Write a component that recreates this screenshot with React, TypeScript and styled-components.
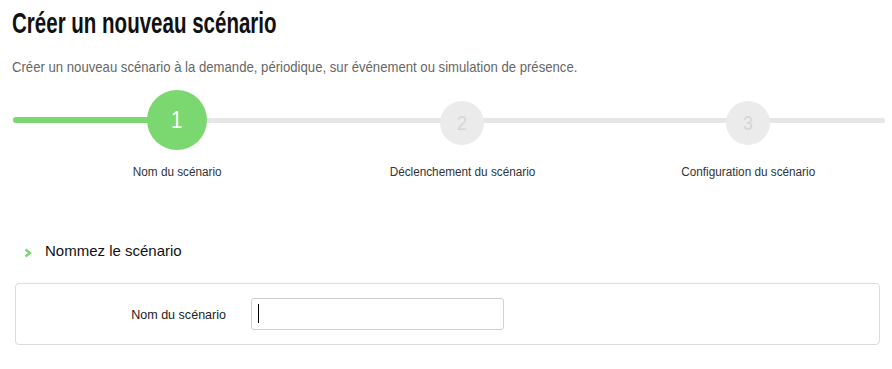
import React from 'react';
import styled, { createGlobalStyle } from 'styled-components';

const GlobalStyle = createGlobalStyle`
  body {
    margin: 0;
    background: #ffffff;
    font-family: "Liberation Sans", Arial, sans-serif;
    color: #222;
  }
`;

const GREEN = '#7bd870';

const Narrow = styled.span<{ $x: number; $origin?: string }>`
  display: inline-block;
  white-space: nowrap;
  transform: scaleX(${(p) => p.$x});
  transform-origin: ${(p) => p.$origin || 'left'} center;
`;

const Page = styled.div`
  width: 892px;
  height: 369px;
  overflow: hidden;
  padding: 0 0 0 12px;
  box-sizing: border-box;
`;

const Title = styled.h1`
  margin: 0;
  padding-top: 6px;
  font-size: 30px;
  line-height: 34px;
  font-weight: bold;
  color: #111;
`;

const Subtitle = styled.p`
  margin: 18px 0 0;
  font-size: 15px;
  line-height: 18px;
  color: #666;
`;

const Stepper = styled.div`
  position: relative;
  margin-top: 14px;
  width: 873px;
`;

const Track = styled.div`
  position: absolute;
  left: 1px;
  right: 0;
  top: 28px;
  height: 5px;
  border-radius: 3px;
  background: #e6e6e6;
`;

const Progress = styled.div<{ $width: number }>`
  position: absolute;
  left: 1px;
  top: 27px;
  width: ${(p) => p.$width}px;
  height: 6px;
  border-radius: 3px;
  background: ${GREEN};
`;

const Steps = styled.ol`
  position: relative;
  list-style: none;
  margin: 0 0 0 22px;
  padding: 0;
  display: grid;
  grid-template-columns: repeat(3, 285.5px);
`;

const Step = styled.li`
  display: flex;
  flex-direction: column;
  align-items: center;
`;

const CircleSlot = styled.div`
  height: 60px;
  display: flex;
  align-items: center;
  justify-content: center;
`;

const Circle = styled.div<{ $active?: boolean }>`
  width: ${(p) => (p.$active ? 60 : 44)}px;
  height: ${(p) => (p.$active ? 60 : 44)}px;
  margin-top: ${(p) => (p.$active ? 0 : 6)}px;
  border-radius: 50%;
  background: ${(p) => (p.$active ? GREEN : '#ebebeb')};
  color: ${(p) => (p.$active ? '#fff' : '#d6d6d6')};
  font-size: ${(p) => (p.$active ? 24 : 21)}px;
  display: flex;
  align-items: center;
  justify-content: center;
`;

const StepLabel = styled.span`
  margin-top: 15px;
  font-size: 12.5px;
  line-height: 15px;
  color: #333;
`;

const SectionTitle = styled.h2`
  margin: 62px 0 0 12px;
  display: flex;
  align-items: center;
  gap: 13px;
  font-size: 15px;
  line-height: 18px;
  font-weight: normal;
  color: #111;
`;

const Chevron = styled.svg`
  width: 8px;
  height: 10px;
  margin-top: 4px;
`;

const Panel = styled.div`
  margin: 23px 0 0 3px;
  width: 865px;
  height: 62px;
  box-sizing: border-box;
  border: 1px solid #dcdcdc;
  border-radius: 4px;
  display: flex;
  align-items: center;
`;

const FieldLabel = styled.label`
  width: 210px;
  text-align: right;
  font-size: 13.5px;
  color: #222;
`;

const InputWrap = styled.div`
  position: relative;
  margin-left: 25px;
`;

const TextInput = styled.input`
  width: 253px;
  height: 32px;
  box-sizing: border-box;
  border: 1px solid #d0d0d0;
  border-radius: 3px;
  outline: none;
  padding: 0 7px;
  font-size: 14px;
  font-family: inherit;
`;

const Caret = styled.span`
  position: absolute;
  left: 7px;
  top: 6px;
  width: 1px;
  height: 19px;
  background: #000;
`;

const steps = ['Nom du scénario', 'Déclenchement du scénario', 'Configuration du scénario'];

export default function App() {
  return (
    <>
      <GlobalStyle />
      <Page>
        <Title>
          <Narrow $x={0.684}>Créer un nouveau scénario</Narrow>
        </Title>
        <Subtitle>
          <Narrow $x={0.876}>
            Créer un nouveau scénario à la demande, périodique, sur événement ou simulation de présence.
          </Narrow>
        </Subtitle>

        <Stepper>
          <Track />
          <Progress $width={165} />
          <Steps>
            {steps.map((label, i) => (
              <Step key={label}>
                <CircleSlot>
                  <Circle $active={i === 0}>
                    <Narrow $x={0.85} $origin="center">{i + 1}</Narrow>
                  </Circle>
                </CircleSlot>
                <StepLabel>
                  <Narrow $x={0.94} $origin="center">{label}</Narrow>
                </StepLabel>
              </Step>
            ))}
          </Steps>
        </Stepper>

        <SectionTitle>
          <Chevron viewBox="0 0 8 10">
            <path d="M1.5 1.5 L6 5 L1.5 8.5" fill="none" stroke={GREEN} strokeWidth="2.4" />
          </Chevron>
          Nommez le scénario
        </SectionTitle>

        <Panel>
          <FieldLabel htmlFor="scenario-name">
            <Narrow $x={0.93} $origin="right">Nom du scénario</Narrow>
          </FieldLabel>
          <InputWrap>
            <TextInput id="scenario-name" type="text" />
            <Caret />
          </InputWrap>
        </Panel>
      </Page>
    </>
  );
}
